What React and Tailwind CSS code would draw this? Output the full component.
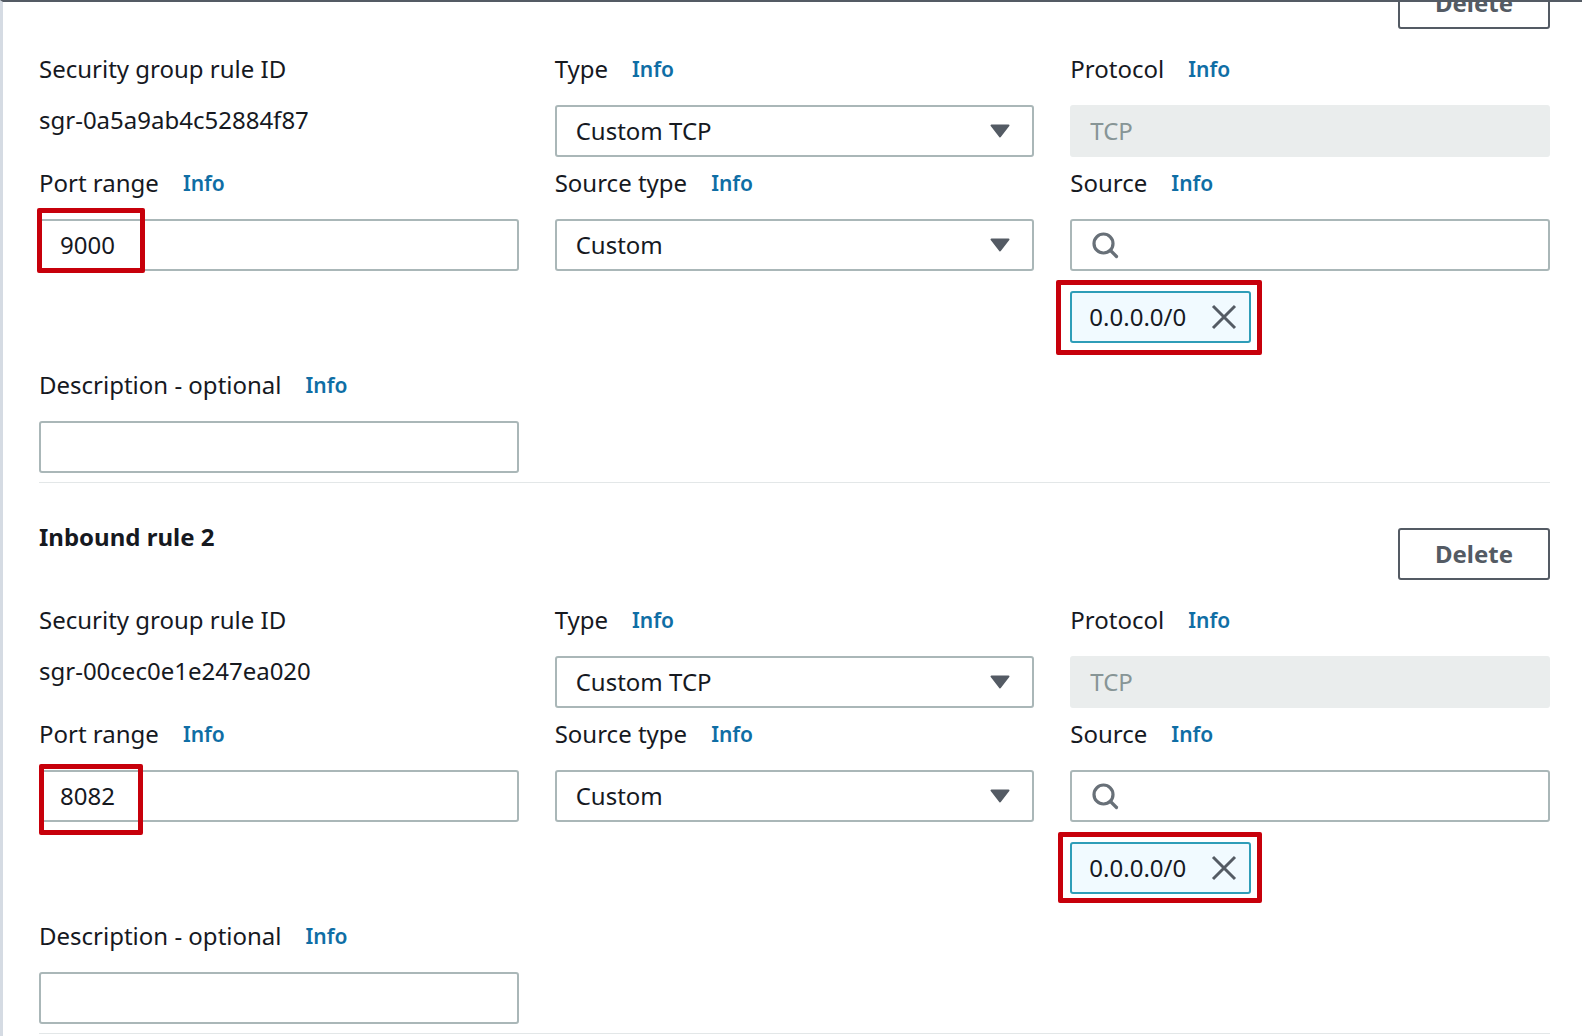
import React from 'react';

function Label({ text }) {
  return (
    <div className="h-8 flex items-center mb-5 whitespace-nowrap">
      <span className="text-[24px] leading-8 text-[#16191f]">{text}</span>
      <span className="ml-6 text-[21px] font-semibold leading-8 text-[#0f6ea5]">Info</span>
    </div>
  );
}

function Box({ children }) {
  return (
    <div className="h-[52px] flex items-center pl-[19px] pr-[22px] bg-white border-2 border-[#aab7b8] rounded-[3px] text-[24px] text-[#16191f]">
      {children}
    </div>
  );
}

function Select({ value }) {
  return (
    <Box>
      <span className="flex-1">{value}</span>
      <svg width="20" height="14" viewBox="0 0 20 14">
        <path d="M1.5 1.5h17L10 12.5z" fill="#545b64" stroke="#545b64" strokeWidth="2" strokeLinejoin="round" />
      </svg>
    </Box>
  );
}

// red annotation drawn over the field
function Marker({ className }) {
  return <div className={`absolute border-[5px] border-[#c7000b] rounded-[2px] ${className}`} />;
}

function Rule({ number, ruleId, port, portMarker, chipMarker }) {
  return (
    <div className="pb-[9px] mb-[45px] border-b border-[#e3e7e8]">
      <div className="flex justify-between h-[52px] mb-6">
        <h3 className="text-[24px] leading-[18px] font-bold text-[#16191f]">Inbound rule {number}</h3>
        <button className="w-[152px] h-[52px] bg-white border-2 border-[#545b64] rounded-[3px] text-[24px] font-bold text-[#545b64]">
          Delete
        </button>
      </div>

      <div className="grid grid-cols-3 gap-x-9 gap-y-[10px]">
        <div>
          <div className="h-8 flex items-center mb-5 text-[24px] text-[#16191f]">Security group rule ID</div>
          <div className="text-[24px] leading-8 -mt-[1px] text-[#16191f]">{ruleId}</div>
        </div>
        <div>
          <Label text="Type" />
          <Select value="Custom TCP" />
        </div>
        <div>
          <Label text="Protocol" />
          <div className="h-[52px] flex items-center pl-5 bg-[#eaeded] rounded-[3px] text-[24px] text-[#879596]">TCP</div>
        </div>

        <div>
          <Label text="Port range" />
          <div className="relative">
            <Box>{port}</Box>
            <Marker className={portMarker} />
          </div>
        </div>
        <div>
          <Label text="Source type" />
          <Select value="Custom" />
        </div>
        <div>
          <Label text="Source" />
          <Box>
            <svg width="28" height="28" viewBox="0 0 28 28" fill="none" stroke="#687078" strokeWidth="3.2" strokeLinecap="round">
              <circle cx="12.5" cy="12.5" r="9.5" />
              <path d="M19.5 19.5l6 6" />
            </svg>
          </Box>
          <div className="relative mt-5 w-[181px]">
            <div className="h-[52px] flex items-center justify-between pl-[17px] pr-[12px] bg-[#f1faff] border-2 border-[#2e9db8] rounded-[3px] text-[24px] text-[#16191f]">
              <span>0.0.0.0/0</span>
              <svg width="26" height="26" viewBox="0 0 26 26" fill="none" stroke="#545b64" strokeWidth="3">
                <path d="M2 2l22 22M24 2L2 24" />
              </svg>
            </div>
            <Marker className={chipMarker} />
          </div>
        </div>
      </div>

      <div className="w-[480px] mt-[26px]">
        <Label text="Description - optional" />
        <Box />
      </div>
    </div>
  );
}

export default function App() {
  return (
    <div className="h-[1036px] overflow-hidden bg-white border-t-2 border-t-[#545b64] border-l-[3px] border-l-[#d5dbe3] pl-9 pr-8" style={{ fontFamily: '"Noto Sans", sans-serif' }}>
      <div className="-mt-[25px]">
        <Rule
          number={1}
          ruleId="sgr-0a5a9ab4c52884f87"
          port="9000"
          portMarker="-left-[2px] -top-[11px] w-[108px] h-[65px]"
          chipMarker="-left-[14px] -top-[11px] w-[206px] h-[75px]"
        />
        <Rule
          number={2}
          ruleId="sgr-00cec0e1e247ea020"
          port="8082"
          portMarker="left-0 -top-[6px] w-[104px] h-[71px]"
          chipMarker="-left-[12px] -top-[10px] w-[204px] h-[71px]"
        />
      </div>
    </div>
  );
}
